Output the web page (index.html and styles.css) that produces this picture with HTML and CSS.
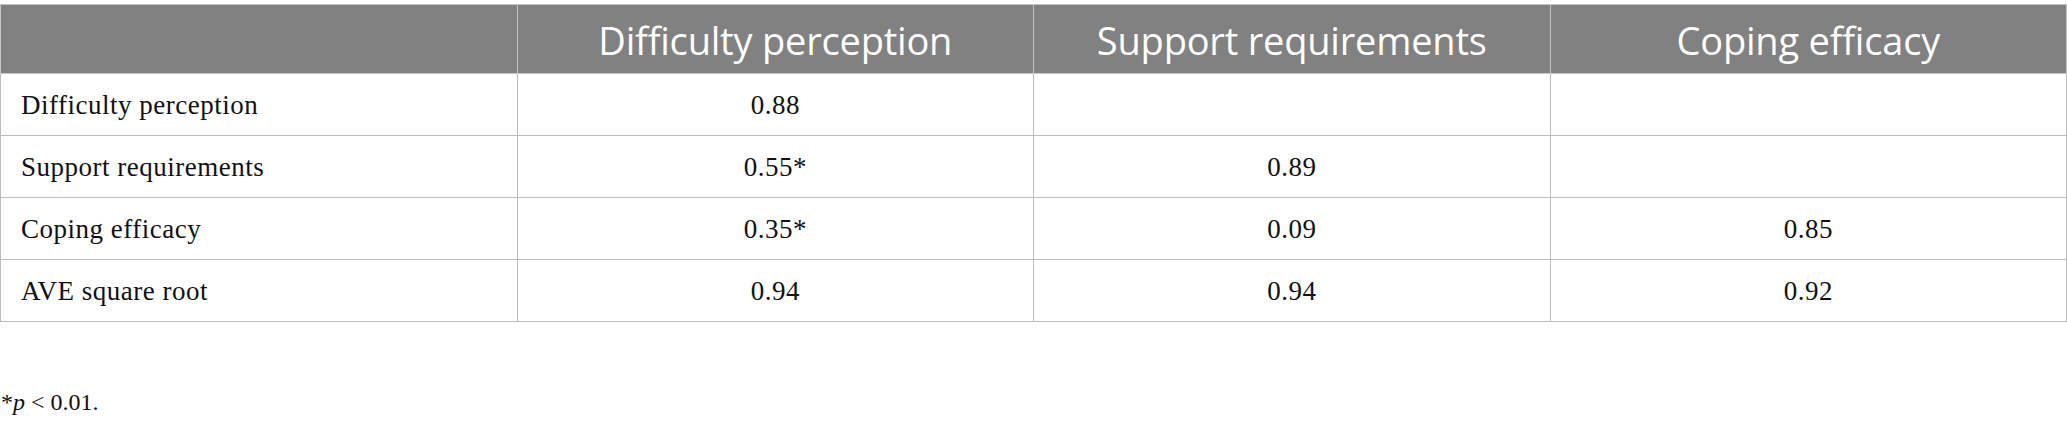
FILE: index.html
```html
<!DOCTYPE html>
<html lang="en">
<head>
<meta charset="utf-8">
<title>Table</title>
<link rel="stylesheet" href="styles.css">
</head>
<body>
<div class="page">
  <table class="data">
    <thead>
      <tr>
        <th></th>
        <th>Difficulty perception</th>
        <th>Support requirements</th>
        <th>Coping efficacy</th>
      </tr>
    </thead>
    <tbody>
      <tr>
        <td class="label">Difficulty perception</td>
        <td>0.88</td>
        <td></td>
        <td></td>
      </tr>
      <tr>
        <td class="label">Support requirements</td>
        <td>0.55*</td>
        <td>0.89</td>
        <td></td>
      </tr>
      <tr>
        <td class="label">Coping efficacy</td>
        <td>0.35*</td>
        <td>0.09</td>
        <td>0.85</td>
      </tr>
      <tr>
        <td class="label">AVE square root</td>
        <td>0.94</td>
        <td>0.94</td>
        <td>0.92</td>
      </tr>
    </tbody>
  </table>
  <p class="note">*<i>p</i> &lt; 0.01.</p>
</div>
</body>
</html>
```
FILE: styles.css
```css
html, body {
  margin: 0;
  padding: 0;
  background: #ffffff;
}

.page {
  padding-top: 4px;
}

.data {
  width: 2067px;
  table-layout: fixed;
  border-collapse: collapse;
  font-family: "Liberation Serif", "Times New Roman", serif;
  font-size: 27px;
  letter-spacing: 0.5px;
  color: #111111;
}

.data th {
  height: 66px;
  padding: 2px 0 0;
  background: #808180;
  color: #ffffff;
  font-family: "Open Sans", "Noto Sans", sans-serif;
  font-weight: 400;
  font-size: 38px;
  letter-spacing: -0.2px;
  text-align: center;
  vertical-align: middle;
  border: 1px solid #c4c4c4;
}

.data td {
  height: 59px;
  padding: 2px 0 0;
  text-align: center;
  vertical-align: middle;
  border: 1px solid #bdbdbd;
}

.data td.label {
  text-align: left;
  padding-left: 20px;
}

.note {
  margin: 67px 0 0 1px;
  font-family: "Liberation Serif", "Times New Roman", serif;
  font-size: 24px;
  color: #111111;
}
```
